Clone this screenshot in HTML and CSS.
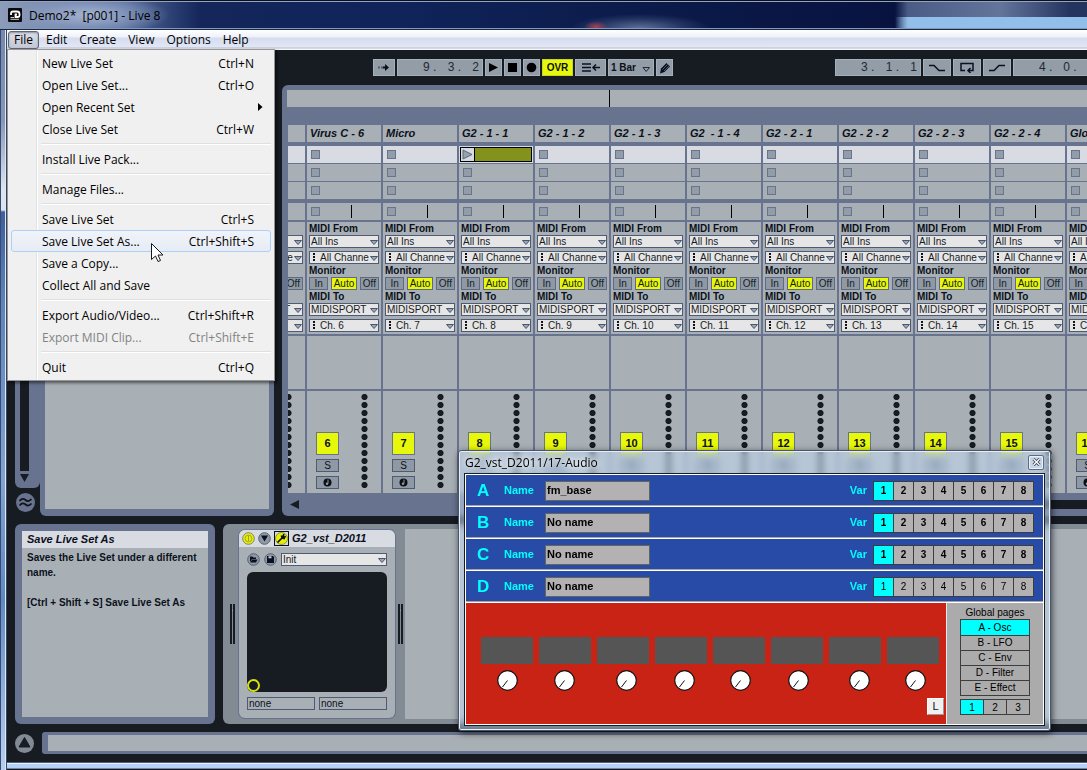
FILE: index.html
```html
<!DOCTYPE html>
<html lang="en">
<head>
<meta charset="utf-8">
<title>Demo2* [p001] - Live 8</title>
<link rel="stylesheet" href="styles.css">
</head>
<body>
<div class="window">
  <header class="titlebar">
    <svg class="app-icon" viewBox="0 0 14 14"><rect width="14" height="14" rx="1" fill="#0a0a0a"/><path d="M3 7V5.500Q3 3.500 5 3.500H9Q11.500 3.500 11.500 6V7.500Q11.500 9 10 9H7.500V6.500H9" fill="none" stroke="#fff" stroke-width="1.800"/><path d="M2.500 9.500H6M2.500 11.300H11" stroke="#ccc"/></svg>
    <span class="title">Demo2*&nbsp; [p001] - Live 8</span>
  </header>
  <nav class="menubar">
    <button class="menu-btn open">File</button>
    <button class="menu-btn">Edit</button>
    <button class="menu-btn">Create</button>
    <button class="menu-btn">View</button>
    <button class="menu-btn">Options</button>
    <button class="menu-btn">Help</button>
  </nav>

  <main class="app">
    <div class="transport">
      <button class="tbtn w22" aria-label="Follow"><svg width="14" height="9"><path d="M1 4.500h2M4 4.500h2" stroke="#555c66" stroke-width="2"/><path d="M6 3.500h2V1l4 3.500L8 8V5.500H6z" fill="#0d1015"/></svg></button>
      <output class="tbtn pos"><span>9 .</span><span>3 .</span><span>2</span></output>
      <button class="tbtn w17" aria-label="Play"><svg width="11" height="11"><path d="M1 1l9 4.500L1 10z"/></svg></button>
      <button class="tbtn w17" aria-label="Stop"><svg width="11" height="11"><path d="M1 1h9v9H1z"/></svg></button>
      <button class="tbtn w17" aria-label="Record"><svg width="11" height="11"><circle cx="5.500" cy="5.500" r="4.800"/></svg></button>
      <button class="tbtn ovr">OVR</button>
      <button class="tbtn w31" aria-label="Back to arrangement"><svg width="18" height="9"><path d="M0 1h9M0 4.500h9M0 8h9" stroke="#0b1020" stroke-width="1.500"/><path d="M11 4.500h7M14 1.500l-3 3 3 3" fill="none" stroke="#0b1020" stroke-width="1.500"/></svg></button>
      <button class="tbtn bar">1 Bar<svg width="9" height="6"><path d="M1 .500h6.500L4.200 4.500z" fill="none" stroke="#222831"/></svg></button>
      <button class="tbtn w17" aria-label="Draw mode"><svg width="12" height="12"><path d="M1 11.500l1-5 5.500-5.500 3.500 3.500-5.500 5.500z" fill="#0b1020"/><path d="M3.500 7.500l5-5M5 9l5-5" stroke="#a0aab5" stroke-width=".500"/></svg></button>
      <output class="tbtn pos second"><span>3 .</span><span>1 .</span><span>1</span></output>
      <button class="tbtn w28" aria-label="Punch in"><svg width="16" height="8"><path d="M0 1.500h5l5 5h6" fill="none" stroke="#0b1020" stroke-width="1.500"/></svg></button>
      <button class="tbtn w28" aria-label="Loop"><svg width="14" height="11"><path d="M5 8.500H1v-7h12v7H8M10.500 6L8 8.500l2.500 2.500" fill="none" stroke="#0b1020" stroke-width="1.500"/></svg></button>
      <button class="tbtn w28" aria-label="Punch out"><svg width="16" height="8"><path d="M0 6.500h5l5-5h6" fill="none" stroke="#0b1020" stroke-width="1.500"/></svg></button>
      <output class="tbtn pos cut"><span>4 .</span><span>0 .</span></output>
    </div>

    <div class="workspace">
      <aside class="browser">
        <div class="browser-tab"><div class="trough"></div><svg width="9" height="8"><path d="M0 0h9L4.500 8z" fill="#171c22"/></svg></div>
        <button class="round groove" aria-label="Groove pool"><svg width="19" height="19"><circle cx="9.500" cy="9.500" r="9.500" fill="#68748f"/><path d="M3.500 8q3-3.500 6-1t6-1M3.500 12.500q3-3.500 6-1t6-1" fill="none" stroke="#10151c" stroke-width="1.700"/></svg></button>
        <div class="browser-body"><div class="browser-list"></div></div>
      </aside>
      <section class="session">
        <div class="overview"><i></i></div>
        <div class="tracks-view"><div class="tracks" id="tracks"></div></div>
        <div class="hscroll"><svg width="10" height="9"><path d="M9 0v9L0 4.500z" fill="#171c22"/></svg><div class="htrough"></div></div>
      </section>
    </div>

    <div class="detail">
      <aside class="info">
        <div class="info-card">
          <h2>Save Live Set As</h2>
          <p>Saves the Live Set under a different name.</p>
          <p class="next">[Ctrl + Shift + S] Save Live Set As</p>
        </div>
      </aside>
      <section class="devices">
        <div class="grip"></div>
        <article class="device">
          <header>
            <button aria-label="Device on"><svg width="13" height="13"><circle cx="6.500" cy="6.500" r="5.800" fill="#e8f000" stroke="#7b8478"/><circle cx="6.500" cy="6.500" r="3.400" fill="none" stroke="#a3a93e"/><path d="M6.500 3.500v5.500" stroke="#9aa040"/></svg></button>
            <button aria-label="Fold"><svg width="13" height="13"><circle cx="6.500" cy="6.500" r="5.800" fill="#8e99a5" stroke="#566073"/><path d="M3 3.500h7l-3.500 6z" fill="#0b1020"/></svg></button>
            <button class="edit" aria-label="Edit plug-in"><svg width="13" height="13"><circle cx="6.500" cy="6.500" r="6" fill="#e8f000" stroke="#8e9530"/><path d="M2.500 10.500l4.500-4.500M6.500 3.500q0 3 3.500 3M9 2L7.500 5.500 11 4.500" fill="none" stroke="#0b1020" stroke-width="1.700"/></svg></button>
            <h2>G2_vst_D2011</h2>
          </header>
          <div class="preset">
            <button aria-label="Open preset"><svg width="13" height="13"><circle cx="6.500" cy="6.500" r="5.800" fill="#8e99a5" stroke="#566073"/><path d="M3 9.500v-6h2.500l1 1H9v1.500H5z" fill="#0b1020"/><path d="M5 6.500h5.500L9 9.500H3.500z" fill="#0b1020"/></svg></button>
            <button aria-label="Save preset"><svg width="13" height="13"><circle cx="6.500" cy="6.500" r="5.800" fill="#8e99a5" stroke="#566073"/><path d="M3 3h6l1 1v6H3z" fill="#0b1020"/><path d="M4.500 3.200h3v2h-3z" fill="#c5ccd4"/></svg></button>
            <span class="pick grow"><select aria-label="Preset"><option>Init</option></select><svg class="arr" width="8" height="5"><path d="M.500 .500h7L4 4.500z" fill="#9aa6b2" stroke="#4a556e"/></svg></span>
          </div>
          <div class="xy"><span></span></div>
          <div class="xy-params"><button>none</button><button>none</button></div>
        </article>
        <div class="grip right"></div>
        <div class="drop-area"></div>
      </section>
    </div>

    <footer class="status">
      <button class="round" aria-label="Toggle help"><svg width="19" height="19"><circle cx="9.500" cy="9.500" r="9.500" fill="#828a94"/><path d="M9.500 3.500L15 13H4z" fill="#171c22" stroke="#171c22"/></svg></button>
      <div class="status-bar"><div></div></div>
    </footer>
  </main>
  <div class="frame-bottom"></div>
</div>

<div class="menu" role="menu">
  <button role="menuitem"><span>New Live Set</span><kbd>Ctrl+N</kbd></button>
  <button role="menuitem"><span>Open Live Set...</span><kbd>Ctrl+O</kbd></button>
  <button role="menuitem" class="sub"><span>Open Recent Set</span><svg width="5" height="8"><path d="M0 0v8l4.500-4z"/></svg></button>
  <button role="menuitem"><span>Close Live Set</span><kbd>Ctrl+W</kbd></button>
  <hr>
  <button role="menuitem"><span>Install Live Pack...</span></button>
  <hr>
  <button role="menuitem"><span>Manage Files...</span></button>
  <hr>
  <button role="menuitem"><span>Save Live Set</span><kbd>Ctrl+S</kbd></button>
  <button role="menuitem" class="hot"><span>Save Live Set As...</span><kbd>Ctrl+Shift+S</kbd></button>
  <button role="menuitem"><span>Save a Copy...</span></button>
  <button role="menuitem"><span>Collect All and Save</span></button>
  <hr>
  <button role="menuitem"><span>Export Audio/Video...</span><kbd>Ctrl+Shift+R</kbd></button>
  <button role="menuitem" disabled><span>Export MIDI Clip...</span><kbd>Ctrl+Shift+E</kbd></button>
  <hr>
  <button role="menuitem"><span>Quit</span><kbd>Ctrl+Q</kbd></button>
</div>
<svg class="cursor" width="13" height="20"><path d="M.500 .500v16l4-3.500 2.500 5.500 2.500-1-2.500-5.500h5z" fill="#fff" stroke="#16181f"/></svg>

<section class="plugin">
  <header><span>G2_vst_D2011/17-Audio</span><button aria-label="Close"><svg width="9" height="8"><path d="M1.500 1l6 6M7.500 1l-6 6" stroke="#3c434e" stroke-width="3"/><path d="M1.500 1l6 6M7.500 1l-6 6" stroke="#fff" stroke-width="1.300"/></svg></button></header>
  <div class="plugin-body">
    <div id="slots"></div>
    <div class="lower">
      <div class="red">
        <div class="displays"><i></i><i></i><i></i><i></i><i></i><i></i><i></i><i></i></div>
        <div class="knobs" id="knobs"></div>
        <button class="lbtn">L</button>
      </div>
      <div class="pages">
        <h3>Global pages</h3>
        <div class="page-list"><button class="on">A - Osc</button><button>B - LFO</button><button>C - Env</button><button>D - Filter</button><button>E - Effect</button></div>
        <div class="page-nums"><button class="on">1</button><button>2</button><button>3</button></div>
      </div>
    </div>
  </div>
</section>
<script src="script.js"></script>
</body>
</html>
```

FILE: script.js
```js
const names = ["", "Virus C - 6", "Micro", "G2 - 1 - 1", "G2 - 1 - 2", "G2 - 1 - 3", "G2 \u00a0- 1 - 4",
  "G2 - 2 - 1", "G2 - 2 - 2", "G2 - 2 - 3", "G2 - 2 - 4", "Glo"];
const arrow = '<svg class="arr" width="8" height="5"><path d="M.500 .500h7L4 4.500z" fill="#9aa6b2" stroke="#4a556e"/></svg>';
const pick = (label, text, dotted) =>
  `<span class="pick${dotted ? " dotted" : ""}"><select aria-label="${label}"><option>${text}</option></select>${arrow}</span>`;
const slot = '<div class="slot"><button class="stop" aria-label="Stop clip"></button></div>';
const clip = '<div class="slot"><button class="clip" aria-label="Launch clip"><svg width="13" height="13"><path d="M2 2l9 4.500L2 11z" fill="#96a1ad" stroke="#5a6579"/></svg><i></i></button></div>';

document.getElementById("tracks").innerHTML = names.map((name, i) => {
  const n = i ? i + 5 : "";
  const first = i === 0;
  return `<div class="track">
    <h2>${name}</h2>
    <div class="slots">${n === 8 ? clip : slot}${slot}${slot}</div>
    <div class="slot state"><button class="stop" aria-label="Stop track"></button><i></i></div>
    <div class="io">
      <b>${first ? "" : "MIDI From"}</b>${pick("MIDI From", first ? "" : "All Ins")}<div class="gap"></div>${pick("Input channel", "All Channe", true)}
      <b>${first ? "" : "Monitor"}</b><div class="mon"><button>${first ? "" : "In"}</button><button class="on">${first ? "" : "Auto"}</button><button>Off</button></div>
      <b>${first ? "" : "MIDI To"}</b>${pick("MIDI To", "MIDISPORT")}<div class="gap"></div>${pick("Output channel", first ? "" : "Ch. " + n, true)}
    </div>
    <div class="sends"></div>
    <div class="mixer">
      <div class="strip"><button class="num">${n}</button><button class="solo">${first ? "" : "S"}</button>
      <button class="arm" aria-label="Arm"><svg width="9" height="9"><circle cx="4.500" cy="4.500" r="4" fill="#0d1015"/><path d="M5 1.500v4" stroke="#8e99a5"/><circle cx="4" cy="5.800" r="1.200" fill="#8e99a5"/></svg></button></div>
      <div class="dots"></div>
    </div>
  </div>`;
}).join("");

document.getElementById("slots").innerHTML = ["A", "B", "C", "D"].map((letter, i) =>
  `<div class="prow"><strong>${letter}</strong><label for="name${letter}">Name</label>
   <input id="name${letter}" value="${i ? "No name" : "fm_base"}"><span class="var">Var</span>
   <div class="vars${i === 3 ? " light" : ""}">${[1, 2, 3, 4, 5, 6, 7, 8].map(v => `<button${v === 1 ? ' class="on"' : ""}>${v}</button>`).join("")}</div></div>`).join("");

document.getElementById("knobs").innerHTML = Array(8).fill(
  '<button aria-label="Knob"><svg width="21" height="21"><circle cx="10.500" cy="10.500" r="9.800" fill="#fff" stroke="#111" stroke-width="1.200"/><path d="M10.500 10.500l-5 6.500" stroke="#111"/></svg></button>').join("");
```

FILE: styles.css
```css
* { box-sizing: border-box; }
body { margin: 0; overflow: hidden; font: 10px/13px "Liberation Sans", Arial, sans-serif; color: #0b1020; background: #0d1730; }
button, select, input, output { font: inherit; color: inherit; margin: 0; padding: 0; border: 0; border-radius: 0; background: none; }
h2, h3, p { margin: 0; font-size: 10px; }
svg { display: block; flex: none; }

.window { display: flex; flex-direction: column; height: 100vh; min-height: 720px; padding-left: 7px; overflow: hidden;
  background: linear-gradient(90deg, #3a4a70 0 1px, transparent 1px 5px, #dfe9f6 5px 6px, #39465e 6px 7px, transparent 7px),
    linear-gradient(#6f84ac 0, #8497ba 120px, #dde5ef 190px, #dde5ef 210px, #3c5f9d 212px, #5d83bb 300px, #7fa3d3 480px, #5e8ac4 600px, #b5cff3 768px); }
.titlebar { height: 30px; flex: none; margin-left: -7px; padding-left: 8px; display: flex; align-items: center; gap: 7px;
  border-top: 1px solid #0a0f1e; border-bottom: 1px solid #16284a; box-shadow: inset 0 1px #93a3c0, inset 0 -1px #8797b5;
  background:
    radial-gradient(ellipse 12px 6px at 596px 26px, #a94052, transparent),
    radial-gradient(ellipse 70px 14px at 640px 27px, #5d6f98, #3c4f7c88 60%, transparent),
    radial-gradient(ellipse 80px 20px at 90px 14px, #b3c1dacc, #8fa1c488 60%, transparent),
    linear-gradient(90deg, transparent 895px, #91bfe9 908px) 0 16px / 100% 13px no-repeat,
    linear-gradient(90deg, transparent 895px, #4a5c85 908px, #64759b 1000px, #25345f 1070px),
    linear-gradient(90deg, #8d9cba 0, #5a70a0 120px, #14265a 200px, #10245a 400px, #0c1c4c 600px, #081340 890px); }
.app-icon { width: 14px; height: 14px; }
.title, .menubar, .menu, .plugin > header { font-family: "Open Sans", "Noto Sans", sans-serif; font-size: 12px; color: #000; }
.menubar { height: 20px; flex: none; display: flex; padding: 1px 0 0 1px; background: linear-gradient(#fff 0, #eef1f9 7px, #d5dcee 8px, #e2e7f5 17px, #b5bccb 18px, #f5f7fb 19px); }
.menu-btn { height: 18px; padding: 0 6px; line-height: 18px; }
.menu-btn.open { padding: 0 5px; margin-right: 1px; border: 1px solid #5f6672; border-radius: 3px; background: linear-gradient(#dcdfe8, #c3c8d6); box-shadow: inset 0 1px 2px #8a90a0; line-height: 16px; }

.app { flex: 1; min-height: 0; display: flex; flex-direction: column; gap: 8px; padding: 0 0 8px 8px; background: #171c22; }
.transport { display: flex; gap: 2px; padding: 9px 0 0 358px; height: 27px; overflow: hidden; }
.tbtn { flex: none; height: 17px; display: flex; align-items: center; justify-content: center; background: #929da8; border: 1px solid #a5b0ba; font-weight: bold; font-size: 10px; color: #0d1015; }
.w17 { width: 17px; } .w22 { width: 22px; } .w28 { width: 28px; } .w31 { width: 31px; }
.ovr { width: 31px; background: #e8f80a; border-color: #c8d428; }
.bar { width: 46px; gap: 6px; }
.bar svg { margin-top: 4px; }
.pos { width: 86px; padding: 0 3px 0 25px; justify-content: space-between; font-weight: normal; font-size: 12px; color: #222831; }
.pos.second { margin-left: 160px; }
.pos.cut { justify-content: flex-start; gap: 11px; }

.workspace { flex: 1; min-height: 0; display: flex; gap: 8px; }
.browser { width: 259px; flex: none; display: grid; grid-template-columns: 25px 1fr; grid-template-rows: 1fr 28px; }
.browser-tab { background: #68748f; border-radius: 6px 0 6px 6px; padding: 6px 5px; display: flex; flex-direction: column; gap: 3px; }
.trough { flex: 1; width: 9px; background: #171c22; }
.groove { grid-row: 2; margin: 5px 0 0 1px; }
.round { width: 19px; height: 19px; }
.browser-body { grid-column: 2; grid-row: 1 / 3; background: #68748f; border-radius: 0 6px 6px 6px; padding: 5px 5px 7px 5px; }
.browser-list { height: 100%; background: #a9b0b5; }

.session { flex: 1; min-width: 0; display: flex; flex-direction: column; padding: 5px 0 0 5px; background: #68748f; border-radius: 6px 0 0 6px; overflow: hidden; }
.overview { height: 17px; flex: none; background: #a9b0b5; padding-left: 322px; }
.overview i { display: block; width: 1px; height: 17px; background: #000; }
.tracks-view { flex: 1; min-height: 0; margin: 18px 0 0 1px; overflow: hidden; display: flex; }
.tracks { display: flex; gap: 2px; margin-left: -57px; }
.track { width: 74px; flex: none; display: flex; flex-direction: column; }
.track h2 { height: 17px; padding-left: 3px; background: #a9b0b5; font: italic bold 11px/17px "Liberation Sans", Arial, sans-serif; white-space: nowrap; overflow: hidden; }
.slots { margin: 4px 0; display: flex; flex-direction: column; gap: 1px; }
.slot { height: 17px; display: flex; align-items: center; padding-left: 4px; background: #a9b0b5; }
.slots .slot:first-child { background: #d8dbe2; }
.stop { width: 9px; height: 9px; background: #929da8; border: 1px solid #68748f; }
.clip { width: 72px; height: 15px; margin-left: -3px; display: flex; border: 1px solid #000; background: #d8dbe2; }
.clip i { flex: 1; height: 13px; border-left: 1px solid #000; background: #83921d; }
.state i { width: 1px; height: 13px; margin-left: 31px; background: #000; }
.io { margin-top: 2px; padding: 0 2px 2px; background: #a9b0b5; display: flex; flex-direction: column; }
.io b { height: 13px; }
.gap { height: 3px; }
.pick { position: relative; display: block; height: 13px; }
.pick select { appearance: none; display: block; width: 100%; height: 13px; padding: 0 6px 0 1px; border: 1px solid #4f5a74; background: #e6e6e6; line-height: 11px; color: #171c22; overflow: hidden; white-space: nowrap; text-overflow: clip; }
.pick.dotted select { padding-left: 10px; background: repeating-linear-gradient(#111 0 2px, transparent 2px 3px) 3px 1px / 2px 9px no-repeat, #e6e6e6; }
.pick .arr { position: absolute; right: 1px; top: 5px; }
.grow { flex: 1; }
.mon { display: flex; gap: 3px; }
.mon button { flex: 19; height: 13px; border: 1px solid #5f6a82; background: #8e99a5; line-height: 11px; color: #171c22; }
.mon .on { flex: 26; background: #e8f80a; }
.sends { height: 53px; margin-top: 2px; background: #a9b0b5; }
.mixer { flex: 1; margin-top: 2px; background: #a9b0b5; display: flex; gap: 22px; padding-left: 9px; }
.strip { width: 23px; padding-top: 41px; display: flex; flex-direction: column; gap: 4px; }
.num { height: 23px; border: 1px solid #68748f; background: #e8f80a; font-weight: bold; font-size: 11px; }
.solo, .arm { height: 13px; border: 1px solid #4f5a74; background: #8e99a5; line-height: 11px; display: flex; align-items: center; justify-content: center; }
.dots { width: 7px; height: 96px; margin-top: 2px; background: radial-gradient(circle closest-side, #171c22 75%, transparent 100%) 0 0 / 7px 8px; }
.hscroll { height: 23px; flex: none; display: flex; align-items: center; gap: 450px; padding-left: 3px; }
.htrough { flex: 1; height: 9px; background: #171c22; }

.detail { height: 200px; flex: none; display: flex; gap: 8px; }
.info { width: 200px; flex: none; padding: 7px; background: #68748f; border-radius: 6px; }
.info-card { height: 100%; background: #a9b0b5; line-height: 15px; font-weight: bold; }
.info-card h2 { padding-left: 5px; background: #d8dbe2; font: italic bold 11px/17px "Liberation Sans", Arial, sans-serif; }
.info-card p { padding: 2px 4px 0 5px; }
.info-card .next { padding-top: 15px; }
.devices { flex: 1; min-width: 0; display: flex; background: #828a94; border-radius: 6px 0 0 6px; padding: 5px 0; }
.grip { width: 5px; height: 40px; flex: none; margin: 75px 4px 0 7px; border: solid #171c22; border-width: 0 2px; background: linear-gradient(90deg, #a9b0b5, #a9b0b5) 0 6px / 100% 1px no-repeat; background-origin: border-box; }
.grip.right { margin: 75px 2px 0 3px; }
.device { width: 156px; flex: none; margin: 1px 0; background: #a9b0b5; border-radius: 6px; display: flex; flex-direction: column; overflow: hidden; box-shadow: 0 0 0 1px #68748f; }
.device header { height: 17px; flex: none; padding-left: 3px; display: flex; align-items: center; gap: 3px; background: #d8dbe2; }
.edit { border: 1px solid #0b1020; }
.device h2 { font-size: 11px; font-style: italic; }
.preset { display: flex; gap: 4px; margin: 6px 8px; }
.xy { flex: 1; margin: 0 8px; border-radius: 6px; background: #171c22; display: flex; align-items: flex-end; }
.xy span { width: 13px; height: 13px; border: 2px solid #d5e010; border-radius: 50%; }
.xy-params { display: flex; gap: 4px; margin: 5px 8px 8px; }
.xy-params button { flex: 1; height: 13px; border: 1px solid #4f5a74; text-align: left; padding-left: 1px; line-height: 11px; }
.drop-area { flex: 1; background: #a9b0b5; }

.status { height: 22px; flex: none; display: flex; align-items: center; gap: 8px; }
.status-bar { flex: 1; height: 22px; padding: 3px 0 3px 6px; background: #68748f; border-radius: 3px 0 0 3px; }
.status-bar div { height: 16px; background: #a9b0b5; }
.frame-bottom { height: 8px; flex: none; background: linear-gradient(#50607c 0 1px, #e8f2fd 1px 2px, #b5d2f6 2px 6px, #6f83a4 6px 7px, #10151c 7px); }

.menu { position: absolute; left: 7px; top: 49px; width: 268px; padding: 2px 3px; border: 1px solid #979797; display: flex; flex-direction: column;
  background: linear-gradient(90deg, transparent 28px, #e2e3e3 28px 29px, #fff 29px 30px, transparent 30px) #f0f0f0; box-shadow: 2px 2px 3px #0008; }
.menu button { height: 22px; display: flex; justify-content: space-between; align-items: center; padding: 0 16px 0 30px; border: 1px solid transparent; border-radius: 3px; }
.menu kbd { font: inherit; }
.menu .sub { padding-right: 7px; }
.menu .hot { border-color: #aecff7; background: linear-gradient(#f0f3f8, #e6ecf5); }
.menu button:disabled { color: #838383; }
.menu hr { width: calc(100% - 30px); height: 2px; margin: 3px 0 3px 30px; border: 0; background: linear-gradient(#e0e0e0 1px, #fff 1px); }
.cursor { position: absolute; left: 151px; top: 243px; }

.plugin { position: absolute; left: 458px; top: 450px; width: 593px; padding: 0 5px 4px; border: 1px solid #4a5568; border-radius: 3px; background: #c4dcf680; backdrop-filter: blur(3px); box-shadow: inset 0 0 0 1px #e4eefa, 1px 2px 7px #000a; }
.plugin > header { height: 22px; display: flex; align-items: center; justify-content: space-between; padding: 0 1px; }
.plugin > header span { text-shadow: 0 0 6px #fff, 0 0 6px #fff; }
.plugin > header button { width: 16px; height: 15px; display: flex; align-items: center; justify-content: center; border: 1px solid #5e6b80; border-radius: 2px; background: #c6d6e8; box-shadow: inset 0 0 0 1px #e9f1fa; }
.plugin-body { border: 1px solid #171c22; padding: 1px; background: #fff; }
.prow { height: 32px; border-bottom: 1px solid #fff; box-shadow: inset 0 -1px #a5a59b; background: #284ba8; color: #0ff; display: flex; align-items: center; padding: 0 9px 0 11px; font-weight: bold; font-size: 11px; }
.prow strong { width: 27px; font-size: 17px; }
.prow label { width: 41px; }
.prow input { width: 105px; height: 20px; padding: 0 0 1px 1px; background: #b3b1b1; border: 1px solid #66635a; color: #000; }
.var { margin-left: auto; padding-right: 6px; }
.vars { display: flex; width: 161px; border: 1px solid #3d3d3d; }
.vars button { flex: 1; height: 18px; background: #b3b1b1; color: #000; font-size: 10px; font-weight: bold; }
.vars button + button { border-left: 1px solid #3d3d3d; }
.vars.light button { font-weight: normal; }
.vars .on, .pages .on { background: #0ff; }
.lower { display: flex; height: 121px; }
.red { flex: 1; display: flex; flex-direction: column; padding: 34px 0 0 15px; background: #c92316; }
.displays { display: grid; grid-template-columns: repeat(8, 52px); gap: 6px; }
.displays i { height: 27px; background: #555; }
.knobs { display: grid; grid-template-columns: 57px 62px 58px 56px 58px 61px 56px 21px; padding: 6px 0 0 16px; }
.lbtn { align-self: flex-end; width: 17px; height: 17px; margin: 7px 2px 0 0; background: #f0f0f0; border: 1px solid #999; border-top-color: #fff; border-left-color: #fff; font-size: 11px; }
.pages { width: 97px; padding: 3px 13px 0; background: #ababab; border-left: 1px solid #e8e8e8; text-align: center; color: #000; }
.pages h3 { font-weight: normal; white-space: nowrap; }
.page-list { display: flex; flex-direction: column; border: 1px solid #3d3d3d; }
.page-list button { height: 15px; line-height: 14px; }
.page-list button + button { border-top: 1px solid #3d3d3d; }
.page-nums { display: flex; margin-top: 3px; border: 1px solid #3d3d3d; }
.page-nums button { flex: 1; height: 14px; }
.page-nums button + button { border-left: 1px solid #3d3d3d; }
```
